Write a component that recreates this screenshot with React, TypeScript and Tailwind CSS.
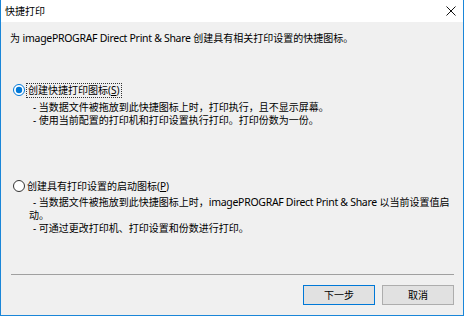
import React from 'react';

function Radio({ checked }: { checked: boolean }) {
  return (
    <svg width="12" height="12" viewBox="0 0 12 12" className="shrink-0">
      <circle cx="6" cy="6" r="5.5" fill="#ffffff" stroke={checked ? '#0078d7' : '#333333'} strokeWidth="1" />
      {checked && <circle cx="6" cy="6" r="3.2" fill="#0078d7" />}
    </svg>
  );
}

function Brand() {
  return <span className="text-[10.5px] tracking-[-0.3px]">imagePROGRAF Direct Print &amp; Share</span>;
}

export default function App() {
  return (
    <div className="w-[464px] h-[316px] flex flex-col bg-[#f0f0f0] border-x border-b border-[#1a86d8] text-[10px] text-black font-['Noto_Sans','Noto_Sans_CJK_SC',sans-serif]">
      {/* Title bar */}
      <div className="h-[22px] shrink-0 bg-white flex items-center justify-between pl-[4px] pr-[7px]">
        <span className="leading-[16px]">快捷打印</span>
        <svg width="10" height="10" viewBox="0 0 10 10">
          <path d="M0.5 0.5 L9.5 9.5 M9.5 0.5 L0.5 9.5" stroke="#111111" strokeWidth="1" />
        </svg>
      </div>

      {/* Body */}
      <div className="flex-1 flex flex-col pl-[9px] pr-[9px] whitespace-nowrap">
        <p className="mt-[8px] h-[16px] leading-[16px]">为 <Brand /> 创建具有相关打印设置的快捷图标。</p>

        <div className="mt-[36px] h-[16px] flex items-center pl-[3px]">
          <Radio checked />
          <span className="ml-px px-px leading-[13px] border border-dotted border-[#333]">
            创建快捷打印图标(<span className="underline">S</span>)
          </span>
        </div>
        <div className="mt-[3px] pl-[23px] leading-[13px]">
          <div>- 当数据文件被拖放到此快捷图标上时，打印执行，且不显示屏幕。</div>
          <div>- 使用当前配置的打印机和打印设置执行打印。打印份数为一份。</div>
        </div>

        <div className="mt-[51px] h-[16px] flex items-center pl-[3px]">
          <Radio checked={false} />
          <span className="ml-[2px] leading-[13px]">
            创建具有打印设置的启动图标(<span className="underline">P</span>)
          </span>
        </div>
        <div className="mt-[2px] pl-[19px] leading-[13px]">
          <div className="pl-[4px] h-[13px]">- 当数据文件被拖放到此快捷图标上时，<Brand /> 以当前设置值启</div>
          <div>动。</div>
          <div className="pl-[4px]">- 可通过更改打印机、打印设置和份数进行打印。</div>
        </div>

        {/* Separator */}
        <div className="mt-[39px] ml-px border-t border-[#a0a0a0]" />

        {/* Buttons */}
        <div className="mt-[10px] flex justify-end gap-[7px]">
          <button className="w-[72px] h-[20px] bg-[#e1e1e1] border border-[#0078d7] leading-none">下一步</button>
          <button className="w-[72px] h-[20px] bg-[#e1e1e1] border border-[#adadad] leading-none">取消</button>
        </div>
      </div>
    </div>
  );
}
